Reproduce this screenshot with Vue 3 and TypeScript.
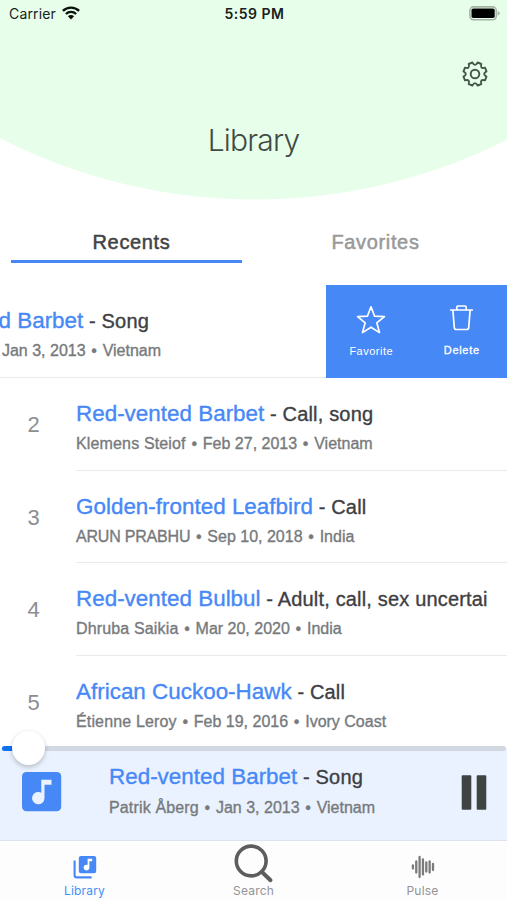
<script setup lang="ts">
import { ref } from 'vue'

interface Recording {
  id: number
  name: string
  kind: string
  recordist: string
  date: string
  country: string
}

const recordings: Recording[] = [
  { id: 1, name: 'Red-vented Barbet', kind: 'Song', recordist: 'Patrik Åberg', date: 'Jan 3, 2013', country: 'Vietnam' },
  { id: 2, name: 'Red-vented Barbet', kind: 'Call, song', recordist: 'Klemens Steiof', date: 'Feb 27, 2013', country: 'Vietnam' },
  { id: 3, name: 'Golden-fronted Leafbird', kind: 'Call', recordist: 'ARUN PRABHU', date: 'Sep 10, 2018', country: 'India' },
  { id: 4, name: 'Red-vented Bulbul', kind: 'Adult, call, sex uncertain', recordist: 'Dhruba Saikia', date: 'Mar 20, 2020', country: 'India' },
  { id: 5, name: 'African Cuckoo-Hawk', kind: 'Call', recordist: 'Étienne Leroy', date: 'Feb 19, 2016', country: 'Ivory Coast' },
]

const playing = recordings[0]
const swipedId = ref(1)
const activeTab = ref<'recents' | 'favorites'>('recents')
const waveBars = [4, 12, 21, 16, 10, 12, 7]

const isCaps = (s: string): boolean => s === s.toUpperCase()
</script>

<template>
  <div class="phone">
    <header class="hero">
      <div class="status">
        <div class="carrier">
          <span>Carrier</span>
          <svg width="18" height="14" viewBox="0 0 18 14">
            <g fill="none" stroke="#0b120c" stroke-width="2.4">
              <path d="M.9 4.9a11.6 11.6 0 0 1 16.2 0" />
              <path d="M3.9 8a7.2 7.2 0 0 1 10.2 0" />
            </g>
            <path d="M5.9 10.3a4.4 4.4 0 0 1 6.2 0L9 13.6z" fill="#0b120c" />
          </svg>
        </div>
        <span class="clock">5:59 PM</span>
        <svg class="battery" width="31" height="15" viewBox="0 0 31 15">
          <rect x=".9" y=".9" width="26.4" height="12.8" rx="3.6" fill="none" stroke="#a5b4a6" stroke-width="1.6" />
          <rect x="2.5" y="2.5" width="23.2" height="9.6" rx="1.8" fill="#000" />
          <path d="M28.7 4.9q2 .9 2 2.4t-2 2.4z" fill="#a5b4a6" />
        </svg>
      </div>
      <svg class="gear" width="26" height="26" viewBox="0 0 26 26" fill="none" stroke="#46564a" stroke-width="1.9" stroke-linejoin="round">
        <path d="M10.4 1.5Q13 6.2 15.6 1.5L19.3 3Q17.8 8.2 23 6.7L24.5 10.4Q19.8 13 24.5 15.6L23 19.3Q17.8 17.8 19.3 23L15.6 24.5Q13 19.8 10.4 24.5L6.7 23Q8.2 17.8 3 19.3L1.5 15.6Q6.2 13 1.5 10.4L3 6.7Q8.2 8.2 6.7 3Z" />
        <circle cx="13" cy="13" r="4.3" />
      </svg>
      <h1>Library</h1>
    </header>

    <nav class="tabs">
      <button :class="{ on: activeTab === 'recents' }" @click="activeTab = 'recents'">Recents</button>
      <button :class="{ on: activeTab === 'favorites' }" @click="activeTab = 'favorites'">Favorites</button>
    </nav>

    <main class="list">
      <div v-for="r in recordings" :key="r.id" class="row" :class="{ swiped: r.id === swipedId }">
        <div class="item">
          <span class="num">{{ r.id }}</span>
          <div class="info">
            <div class="title"><b>{{ r.name }}</b> - {{ r.kind }}</div>
            <div class="sub">
              <span class="who" :class="{ caps: isCaps(r.recordist) }">{{ r.recordist }}</span> <i>•</i> {{ r.date }} <i>•</i> {{ r.country }}
            </div>
          </div>
        </div>
        <div v-if="r.id === swipedId" class="actions">
          <div class="action favorite">
            <svg width="30" height="30" viewBox="0 0 30 30" fill="none" stroke="#fff" stroke-width="1.7" stroke-linejoin="round">
              <path d="M15 1.8L18.6 11.2L28.4 11.7L20.8 17.8L23.5 27.6L15 22.2L6.5 27.6L9.2 17.8L1.6 11.7L11.4 11.2Z" />
            </svg>
            <span>Favorite</span>
          </div>
          <div class="action delete">
            <svg width="26" height="28" viewBox="0 0 26 28" fill="none" stroke="#fff" stroke-width="1.7" stroke-linejoin="round" stroke-linecap="round">
              <path d="M1.7 6H23.3M7.8 5.8V3.2Q7.8 2 9 2H16Q17.2 2 17.2 3.2V5.8M3.9 6.3L5.3 23.6Q5.5 25.5 7.3 25.5H17.7Q19.5 25.5 19.7 23.6L21.1 6.3" />
            </svg>
            <span>Delete</span>
          </div>
        </div>
      </div>
    </main>

    <section class="player">
      <div class="track"><div class="elapsed"></div><div class="thumb"></div></div>
      <svg class="art" width="40" height="40" viewBox="0 0 40 40">
        <rect width="39.2" height="39.2" rx="4.5" fill="#4788f7" />
        <path d="M19.3 7.8H29.5V12.8H22.5V26A6.2 6.2 0 1 1 19.3 20.7Z" fill="#eaf2ff" />
      </svg>
      <div class="info">
        <div class="title"><b>{{ playing.name }}</b> - {{ playing.kind }}</div>
        <div class="sub">
          <span class="who">{{ playing.recordist }}</span> <i>•</i> {{ playing.date }} <i>•</i> {{ playing.country }}
        </div>
      </div>
      <svg class="pause" width="26" height="36" viewBox="0 0 26 36" fill="#404344">
        <rect x=".7" y=".2" width="9.6" height="34.6" rx="1" />
        <rect x="15.7" y=".2" width="9.6" height="34.6" rx="1" />
      </svg>
    </section>

    <footer class="bar">
      <div class="tab current">
        <svg width="24" height="24" viewBox="0 0 24 24">
          <path d="M1.6 5.5V20.2Q1.6 22.4 3.8 22.4H18.6" fill="none" stroke="#4788f7" stroke-width="2.1" />
          <rect x="5.8" y=".9" width="17.4" height="17.4" rx="2.2" fill="#4788f7" />
          <path d="M14.6 3.7H19.2V6.3H16.4V12.5A2.9 2.9 0 1 1 14.6 9.9Z" fill="#fff" />
        </svg>
        <span>Library</span>
      </div>
      <div class="tab search">
        <svg width="40" height="40" viewBox="0 0 40 40" fill="none" stroke="#5d5d5d" stroke-linecap="round">
          <circle cx="17.2" cy="17" r="14.9" stroke-width="3.6" />
          <path d="M28.2 28.2L36.5 36.2" stroke-width="4" />
        </svg>
        <span>Search</span>
      </div>
      <div class="tab">
        <svg width="24" height="24" viewBox="0 0 24 24" stroke="#7b7b7b" stroke-width="2.3" stroke-linecap="round">
          <path v-for="(h, i) in waveBars" :key="i" :d="`M${1.9 + i * 3.35} ${12 - h / 2 + 0.5}V${12 + h / 2 - 0.5}`" />
        </svg>
        <span>Pulse</span>
      </div>
    </footer>
  </div>
</template>

<style>
body {
  margin: 0;
}
</style>

<style scoped>
.phone {
  box-sizing: border-box;
  width: 507px;
  height: 900px;
  overflow: hidden;
  display: flex;
  flex-direction: column;
  background: #fff;
  color: #3d4043;
  font-family: 'Liberation Sans', Arial, sans-serif;
}
.hero {
  height: 200px;
  flex: none;
  display: flex;
  flex-direction: column;
  background: radial-gradient(circle at 255px -361.5px, #e7ffea 560.5px, #fff 561.5px);
}
.status {
  height: 28px;
  padding: 0 7px 0 9px;
  display: grid;
  grid-template-columns: 1fr auto 1fr;
  align-items: center;
  font: 400 14px/28px Inter, sans-serif;
  color: #18211a;
}
.carrier {
  display: flex;
  align-items: center;
  gap: 6px;
  letter-spacing: 0.15px;
}
.carrier svg {
  margin-top: -3px;
}
.clock {
  font-weight: 600;
  letter-spacing: 0.5px;
}
.battery {
  justify-self: end;
  margin-top: -2px;
}
.gear {
  align-self: flex-end;
  margin: 33px 19px 0 0;
}
h1 {
  margin: 31px 0 0;
  text-align: center;
  font: 300 30px/44px Inter, sans-serif;
  letter-spacing: -0.8px;
  color: #414b43;
}
.tabs {
  flex: none;
  height: 85px;
  box-sizing: border-box;
  padding: 20px 11px 22px;
  display: grid;
  grid-template-columns: 231px 231px;
  column-gap: 13px;
}
.tabs button {
  border: 0;
  padding: 4px 0 0 10px;
  background: none;
  border-bottom: 3px solid transparent;
  font: 400 20px/36px 'Liberation Sans', Arial, sans-serif;
  letter-spacing: 0.65px;
  color: #999;
  -webkit-text-stroke: 0.5px;
}
.tabs .on {
  color: #414345;
  border-color: #4788f7;
}
.list {
  flex: none;
  height: 460px;
  overflow: hidden;
}
.row {
  display: flex;
  height: 92.75px;
}
.item {
  flex: none;
  width: 507px;
  display: flex;
}
.swiped .item {
  margin-left: -181px;
}
.num {
  width: 76px;
  box-sizing: border-box;
  padding-right: 9px;
  text-align: center;
  line-height: 93px;
  font-size: 22px;
  color: #8c8e90;
}
.info {
  flex: 1;
  min-width: 0;
}
.item .info {
  padding: 20px 19px 0 0;
  box-shadow: inset 0 -1px #e9eaeb;
}
.title {
  overflow: hidden;
  white-space: nowrap;
  line-height: 32px;
  font-size: 20px;
  letter-spacing: 0.17px;
  -webkit-text-stroke: 0.35px;
}
.title b {
  font-weight: 400;
  font-size: 22.4px;
  letter-spacing: 0.02px;
  color: #4788f7;
}
.sub {
  line-height: 28px;
  font-size: 16px;
  white-space: nowrap;
  color: #777a7d;
  -webkit-text-stroke: 0.35px;
}
.sub i {
  font-style: normal;
  margin: 0 1.3px;
}
.who {
  letter-spacing: 0.15px;
}
.who.caps {
  letter-spacing: -0.2px;
}
.actions {
  flex: none;
  width: 181px;
  background: #4788f7;
  display: grid;
  grid-template-columns: 1fr 1fr;
}
.action {
  display: flex;
  flex-direction: column;
  align-items: center;
  color: #fff;
  font-size: 11px;
  line-height: 14px;
}
.favorite {
  padding-top: 20px;
  gap: 9px;
  letter-spacing: 0.5px;
}
.delete {
  padding-top: 19px;
  gap: 11px;
  -webkit-text-stroke: 0.3px;
  letter-spacing: 0.7px;
}
.player {
  flex: none;
  position: relative;
  box-sizing: border-box;
  height: 95px;
  padding: 16px 20px 0 22px;
  display: flex;
  background: linear-gradient(#fff 3px, #eaf2ff 3px);
}
.player .sub {
  line-height: 30px;
}
.art {
  flex: none;
  margin: 11px 47px 0 0;
}
.pause {
  flex: none;
  margin-top: 14px;
}
.track {
  position: absolute;
  left: 2px;
  right: 1px;
  top: 1px;
  height: 5px;
  border-radius: 3px;
  background: #d2d8e2;
}
.elapsed {
  width: 26px;
  height: 5px;
  border-radius: 3px;
  background: #0b72f0;
}
.thumb {
  position: absolute;
  left: 10px;
  top: -15px;
  width: 33px;
  height: 34px;
  border-radius: 50%;
  background: #fff;
  box-shadow: 0 2px 5px rgba(0, 0, 0, 0.23);
}
.bar {
  flex: none;
  height: 60px;
  box-sizing: border-box;
  border-top: 1px solid #dde3ec;
  background: #fdfdfe;
  display: grid;
  grid-template-columns: repeat(3, 1fr);
  font: 400 12px/16px Inter, sans-serif;
}
.tab {
  display: flex;
  flex-direction: column;
  align-items: center;
  padding-top: 14px;
  gap: 4px;
  letter-spacing: 0.2px;
  color: #949494;
}
.current {
  color: #3f91f8;
}
.search {
  padding-top: 3px;
  gap: 0;
}
.search span {
  margin-top: -1px;
}
</style>
